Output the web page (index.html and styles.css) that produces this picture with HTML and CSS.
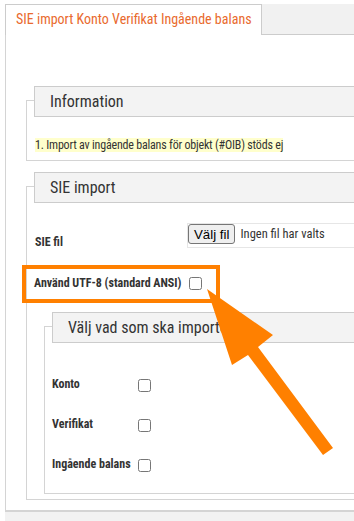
FILE: index.html
```html
<!DOCTYPE html>
<html lang="sv">
<head>
<meta charset="utf-8">
<title>SIE import</title>
<link rel="stylesheet" href="styles.css">
</head>
<body>
<div class="page">
  <div class="tabs">
    <div class="tab">SIE import Konto Verifikat Ingående balans</div>
  </div>
  <div class="panel">
    <section class="group group-info">
      <div class="legend">Information</div>
      <p class="notice"><span class="mark">1. Import av ingående balans för objekt (#OIB) stöds ej</span></p>
    </section>
    <section class="group group-sie">
      <div class="legend">SIE import</div>
      <div class="row row-file">
        <label class="lbl">SIE fil</label>
        <div class="file"><button class="file-btn" type="button">Välj fil</button><span class="file-text">Ingen fil har valts</span></div>
      </div>
      <div class="row row-utf">
        <label class="lbl lbl-utf">Använd UTF-8 (standard ANSI)</label>
        <input type="checkbox" class="cb">
      </div>
      <section class="group group-choose">
        <div class="legend">Välj vad som ska importeras</div>
        <div class="checks">
          <div class="crow"><label class="clbl">Konto</label><input type="checkbox" class="cb"></div>
          <div class="crow"><label class="clbl">Verifikat</label><input type="checkbox" class="cb"></div>
          <div class="crow"><label class="clbl">Ingående balans</label><input type="checkbox" class="cb"></div>
        </div>
      </section>
    </section>
  </div>
  <div class="footer"></div>
  <div class="callout"></div>
  <svg class="arrow" width="354" height="521" viewBox="0 0 354 521">
    <polygon points="207,289 273,335 258,347 333,448 323,455 248,355 232,365" fill="#ff8000"/>
  </svg>
</div>
</body>
</html>
```

FILE: styles.css
```css
* { box-sizing: border-box; }
html, body { margin: 0; padding: 0; background: #fff; overflow: hidden; }
body {
  width: 354px;
  height: 521px;
  font-family: "Roboto Condensed", Roboto, sans-serif;
  font-stretch: condensed;
  color: #333;
}
.page { position: relative; padding: 4px 0 0 5px; width: 640px; height: 521px; }
.tabs { display: flex; height: 31px; background: #f1f1f1; border-bottom: 1px solid #ccc; }
.tab {
  width: 257px; height: 31px; margin-bottom: -1px;
  background: #fff; border: 1px solid #ccc; border-bottom: none;
  padding-left: 10px; font-size: 14px; line-height: 29px; color: #e96a2e;
  white-space: nowrap;
}
.panel {
  border-left: 1px solid #d4d4d4; border-bottom: 2px solid #d4d4d4;
  padding: 65px 0 10px 20px;
}
.group { border: 1px solid #d4d4d4; }
.legend {
  margin: -15px 0 0 7px; height: 31px; background: #f3f3f3; border: 1px solid #ccc;
  padding-left: 15px; font-size: 16px; line-height: 29px; color: #333; white-space: nowrap;
}
.notice { margin: 21px 0 8px 8px; font-size: 12px; letter-spacing: -0.2px; line-height: 14px; }
.mark { background: #ffffcc; }
.group-sie { margin-top: 25px; padding-bottom: 5px; }
.row { display: flex; }
.row-file { margin-top: 20px; padding-left: 8px; align-items: flex-end; }
.lbl { font-size: 12px; font-weight: bold; line-height: 16px; }
.row-file .lbl { width: 152px; margin-bottom: -2px; }
.file { display: flex; align-items: flex-start; height: 25px; flex: 1; border: 1px solid #e6e6e6; border-right: none; }
.file-btn {
  margin: 0; height: 20px; padding: 0 5px; font-family: "Liberation Sans", Arial, sans-serif; font-size: 13.3px;
  background: #efefef; border: 1px solid #767676; border-radius: 3px; color: #000;
}
.file-text { margin-left: 5px; font-size: 12.5px; line-height: 19px; color: #333; }
.row-utf { margin-top: 27px; padding-left: 7px; align-items: center; }
.lbl-utf { width: 155px; }
.cb { margin: 0; width: 13px; height: 13px; }
.group-choose { margin: 35px 0 0 17px; padding-bottom: 21px; }
.checks { display: flex; flex-direction: column; gap: 27px; margin-top: 36px; padding-left: 7px; }
.crow { display: flex; align-items: flex-start; height: 13px; }
.clbl { width: 86px; font-size: 12px; font-weight: bold; line-height: 14px; margin-top: -2px; }
.footer { height: 20px; background: #f2f2f2; }
.callout { position: absolute; left: 22px; top: 265px; width: 198px; height: 38px; border: 4px solid #ff8000; }
.arrow { position: absolute; left: 0; top: 0; }
```
